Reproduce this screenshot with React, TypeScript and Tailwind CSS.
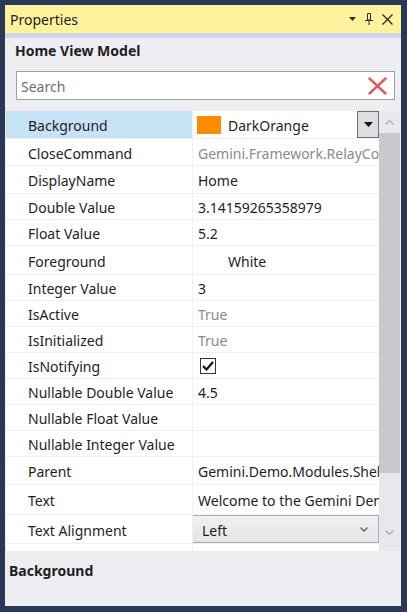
import React from 'react';

type PropRow = {
    name: string;
    value?: string;
    kind?: 'text' | 'muted' | 'color' | 'check' | 'combo';
    swatch?: string;
    h: string;
    selected?: boolean;
};

// --- DATA ---
const rows: PropRow[] = [
    { name: 'Background', value: 'DarkOrange', kind: 'color', swatch: 'bg-[#ff8c00]', h: 'h-[28px]', selected: true },
    { name: 'CloseCommand', value: 'Gemini.Framework.RelayCommand', kind: 'muted', h: 'h-[27px]' },
    { name: 'DisplayName', value: 'Home', h: 'h-[28px]' },
    { name: 'Double Value', value: '3.14159265358979', h: 'h-[26px]' },
    { name: 'Float Value', value: '5.2', h: 'h-[26px]' },
    { name: 'Foreground', value: 'White', kind: 'color', swatch: 'bg-white', h: 'h-[29px]' },
    { name: 'Integer Value', value: '3', h: 'h-[26px]' },
    { name: 'IsActive', value: 'True', kind: 'muted', h: 'h-[26px]' },
    { name: 'IsInitialized', value: 'True', kind: 'muted', h: 'h-[26px]' },
    { name: 'IsNotifying', kind: 'check', h: 'h-[26px]' },
    { name: 'Nullable Double Value', value: '4.5', h: 'h-[26px]' },
    { name: 'Nullable Float Value', value: '', h: 'h-[26px]' },
    { name: 'Nullable Integer Value', value: '', h: 'h-[26px]' },
    { name: 'Parent', value: 'Gemini.Demo.Modules.Shell.ViewModels', h: 'h-[28px]' },
    { name: 'Text', value: 'Welcome to the Gemini Demo!', h: 'h-[30px]' },
    { name: 'Text Alignment', value: 'Left', kind: 'combo', h: 'h-[29px]' },
];

// --- SMALL PIECES ---
const TitleButtons: React.FC = () => (
    <div className="flex items-center gap-[9px]">
        <svg width="7" height="4" viewBox="0 0 7 4"><path d="M0 0h7L3.5 4z" fill="#2d2d30" /></svg>
        <svg width="8" height="12" viewBox="0 0 8 12" fill="none" stroke="#2d2d30" strokeWidth="1">
            <path d="M2.5 0.5h3v6.5h-3z" />
            <path d="M0 7.5h8" />
            <path d="M4 7.5v4.5" />
        </svg>
        <svg width="11" height="11" viewBox="0 0 11 11" stroke="#2d2d30" strokeWidth="1.4">
            <path d="M0.5 0.5l10 10M10.5 0.5l-10 10" />
        </svg>
    </div>
);

const ValueCell: React.FC<{ row: PropRow }> = ({ row }) => {
    switch (row.kind) {
        case 'color':
            return (
                <div className="flex h-full items-center">
                    <div className="flex flex-1 items-center pl-[4px] min-w-0">
                        <span className={`w-[24px] h-[18px] shrink-0 ${row.swatch}`}></span>
                        <span className="ml-[7px] pt-[2px] whitespace-nowrap">{row.value}</span>
                    </div>
                    {row.selected && (
                        <div className="w-[22px] h-full border border-[#707070] bg-[#dedede] flex items-center justify-center">
                            <svg width="9" height="5" viewBox="0 0 9 5"><path d="M0 0h9L4.5 5z" fill="#111" /></svg>
                        </div>
                    )}
                </div>
            );
        case 'check':
            return (
                <div className="flex h-full items-center pl-[7px] pt-[1px]">
                    <div className="w-[16px] h-[16px] border border-[#333] bg-white flex items-center justify-center">
                        <svg width="12" height="10" viewBox="0 0 12 10" fill="none" stroke="#111" strokeWidth="2.2">
                            <path d="M1 5l3.5 3.5L11 1" />
                        </svg>
                    </div>
                </div>
            );
        case 'combo':
            return (
                <div className="h-full -ml-px border border-[#acacac] bg-gradient-to-b from-[#f0f0f0] to-[#e5e5e5] flex items-center justify-between pl-[9px] pr-[10px]">
                    <span className="pt-[2px]">{row.value}</span>
                    <svg width="8" height="5" viewBox="0 0 8 5" fill="none" stroke="#606060" strokeWidth="1.3">
                        <path d="M0.5 0.5l3.5 3.5 3.5-3.5" />
                    </svg>
                </div>
            );
        case 'muted':
            return <div className="flex h-full items-center pl-[5px] pt-[2px] whitespace-nowrap text-[#8a8a8a]">{row.value}</div>;
        default:
            return <div className="flex h-full items-center pl-[5px] pt-[2px] whitespace-nowrap">{row.value}</div>;
    }
};

// --- MAIN COMPONENT ---
const App: React.FC = () => {
    return (
        <div className="w-[407px] h-[612px] bg-[#293955] pt-[5px] pl-[5px] pr-[6px] pb-[6px] text-[14px] text-[#1e1e1e]" style={{ fontFamily: '"Noto Sans", "Open Sans", sans-serif' }}>
            <div className="flex flex-col h-full bg-[#eeeef2]">
                {/* title bar */}
                <div className="h-[28px] bg-[#fff29d] flex items-center justify-between pl-[5px] pr-[8px]">
                    <span className="pt-[1px]">Properties</span>
                    <TitleButtons />
                </div>
                <div className="h-[5px] bg-[#cdd4ea]"></div>

                <div className="h-[22px] mt-[1px] flex items-center pl-[10px] font-bold">Home View Model</div>

                {/* search */}
                <div className="mt-[10px] ml-[11px] w-[379px] h-[29px] border border-[#a0a0a0] bg-white flex items-center justify-between pl-[4px] pr-[7px]">
                    <span className="pt-[2px] text-[#6d6d6d]">Search</span>
                    <svg width="19" height="18" viewBox="0 0 19 18" stroke="#e05a5a" strokeWidth="2.4" strokeLinecap="round">
                        <path d="M1.5 1.5l16 15M17.5 1.5l-16 15" />
                    </svg>
                </div>

                {/* property grid */}
                <div className="mt-[11px] ml-px mr-px flex h-[440px]">
                    <div className="flex-1 min-w-0 bg-white overflow-hidden">
                        {rows.map(r => (
                            <div key={r.name} className={`flex border-b border-[#f0f0f0] ${r.h}`}>
                                <div className={`w-[187px] shrink-0 flex items-center pl-[22px] pt-[2px] whitespace-nowrap border-r border-[#f0f0f0] ${r.selected ? 'bg-[#c6e2f5]' : ''}`}>{r.name}</div>
                                <div className="flex-1 min-w-0 overflow-hidden">
                                    <ValueCell row={r} />
                                </div>
                            </div>
                        ))}
                        <div className="flex h-[8px]">
                            <div className="w-[187px] border-r border-[#f0f0f0]"></div>
                        </div>
                    </div>
                    {/* scrollbar */}
                    <div className="w-[21px] shrink-0 bg-[#e8e8ec] flex flex-col">
                        <div className="h-[22px] flex items-center justify-center">
                            <svg width="9" height="5" viewBox="0 0 9 5" fill="none" stroke="#b0b0b4" strokeWidth="1.3">
                                <path d="M0.5 4.5l4-4 4 4" />
                            </svg>
                        </div>
                        <div className="h-[340px] bg-[#c9c9cd]"></div>
                        <div className="flex-1"></div>
                        <div className="h-[22px] flex items-start justify-center pt-[6px] mb-[5px]">
                            <svg width="9" height="5" viewBox="0 0 9 5" fill="none" stroke="#b0b0b4" strokeWidth="1.3">
                                <path d="M0.5 0.5l4 4 4-4" />
                            </svg>
                        </div>
                    </div>
                </div>

                {/* description */}
                <div className="pl-[4px] pt-[9px] font-bold">Background</div>
            </div>
        </div>
    );
};

export default App;
